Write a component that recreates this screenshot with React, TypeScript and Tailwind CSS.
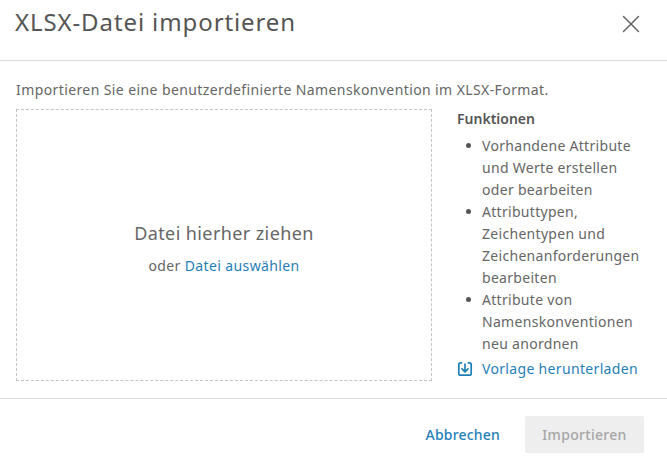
import { X } from 'lucide-react'

const features = [
  ['Vorhandene Attribute', 'und Werte erstellen', 'oder bearbeiten'],
  ['Attributtypen,', 'Zeichentypen und', 'Zeichenanforderungen', 'bearbeiten'],
  ['Attribute von', 'Namenskonventionen', 'neu anordnen'],
]

const App = () => {
  return (
    <div className="w-[667px] h-[462px] bg-white flex flex-col overflow-hidden text-[#666666] font-['Noto_Sans',sans-serif]">
      {/* HEADER */}
      <header className="h-[61px] shrink-0 flex items-start justify-between pl-[15px] pr-[21px] pt-[9px] border-b border-[#dcdcdc]">
        <h1 className="text-[24px] leading-[26px] tracking-[0.9px] text-[#555555]">XLSX-Datei importieren</h1>
        <button className="text-[#666666]">
          <X className="w-[30px] h-[30px]" strokeWidth={1.2} />
        </button>
      </header>

      {/* BODY */}
      <main className="flex-1 flex flex-col pt-[19px] pl-[16px] pr-[23px]">
        <p className="text-[14px] leading-[20px] tracking-[0.4px] mb-[9px] whitespace-nowrap">Importieren Sie eine benutzerdefinierte Namenskonvention im XLSX-Format.</p>
        <div className="flex">
          <div className="w-[416px] h-[272px] border border-dashed border-[#c4c4c4] flex flex-col items-center justify-center pt-[6px]">
            <div className="text-[18px] leading-[24px] tracking-[0.4px]">Datei hierher ziehen</div>
            <div className="text-[14px] leading-[20px] tracking-[0.38px] mt-[11px]">
              oder <a className="text-[#1f80b8]">Datei auswählen</a>
            </div>
          </div>

          <aside className="ml-[25px] flex-1">
            <h2 className="text-[14px] leading-[20px] font-semibold text-[#555555]">Funktionen</h2>
            <ul className="mt-[6px]">
              {features.map((lines) => (
                <li key={lines[0]} className="relative pl-[25px] text-[14px] leading-[22px] tracking-[0.3px]">
                  <span className="absolute left-[9px] top-[8px] w-[5px] h-[5px] rounded-full bg-[#555555]" />
                  {lines.map((line) => (
                    <div key={line} className="whitespace-nowrap">{line}</div>
                  ))}
                </li>
              ))}
            </ul>
            <a className="mt-[4px] flex items-center text-[14px] leading-[20px] tracking-[0.33px] text-[#1f80b8] whitespace-nowrap">
              <svg viewBox="0 0 16 16" className="w-[16px] h-[16px] mr-[9px] shrink-0" fill="none" stroke="currentColor" strokeWidth="1.7" strokeLinecap="round" strokeLinejoin="round">
                <path d="M4.6 1.8H3.6C2.5 1.8 1.8 2.5 1.8 3.6v8.8c0 1.1.7 1.8 1.8 1.8h8.8c1.1 0 1.8-.7 1.8-1.8V3.6c0-1.1-.7-1.8-1.8-1.8h-1" />
                <path d="M8 3v7.6M5 7.8l3 3 3-3" />
              </svg>
              Vorlage herunterladen
            </a>
          </aside>
        </div>
      </main>

      {/* FOOTER */}
      <footer className="h-[64px] shrink-0 border-t border-[#dcdcdc] flex items-start justify-end pt-[17px] pr-[23px]">
        <button className="h-[37px] mr-[25px] text-[14px] font-medium tracking-[0.2px] text-[#1f80b8]">Abbrechen</button>
        <button className="w-[119px] h-[37px] rounded-[2px] bg-[#eeeeee] text-[14px] font-medium tracking-[0.3px] text-[#a6a6a6]">Importieren</button>
      </footer>
    </div>
  )
}

export default App
